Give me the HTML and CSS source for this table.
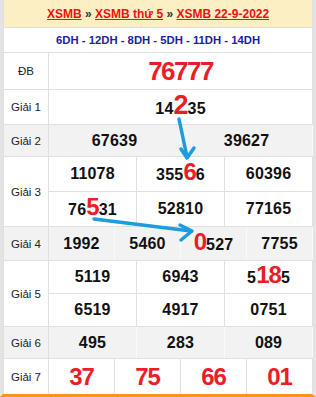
FILE: index.html
```html
<!DOCTYPE html>
<html lang="vi">
<head>
<meta charset="utf-8">
<link rel="stylesheet" href="styles.css">
</head>
<body>
<div class="frame">
  <table class="kq">
    <colgroup>
      <col class="c-label">
      <col class="c"><col class="c"><col class="c"><col class="c"><col class="c"><col class="c">
      <col class="c"><col class="c"><col class="c"><col class="c"><col class="c"><col class="c">
    </colgroup>
    <tr class="r-head">
      <td colspan="13" class="head"><a href="#">XSMB</a> <span class="sep">»</span> <a href="#">XSMB thứ 5</a> <span class="sep">»</span> <a href="#">XSMB 22-9-2022</a></td>
    </tr>
    <tr class="r-dh">
      <td colspan="13" class="dh">6DH - 12DH - 8DH - 5DH - 11DH - 14DH</td>
    </tr>
    <tr class="r-db">
      <td class="lbl">ĐB</td>
      <td colspan="12" class="num db">76777</td>
    </tr>
    <tr class="r-g1">
      <td class="lbl">Giải 1</td>
      <td colspan="12" class="num">14<span class="hl hl-big">2</span>35</td>
    </tr>
    <tr class="r-g2 alt">
      <td class="lbl">Giải 2</td>
      <td colspan="6" class="num">67639</td>
      <td colspan="6" class="num">39627</td>
    </tr>
    <tr class="r-sub">
      <td class="lbl" rowspan="2">Giải 3</td>
      <td colspan="4" class="num">11078</td>
      <td colspan="4" class="num">355<span class="hl">6</span>6</td>
      <td colspan="4" class="num">60396</td>
    </tr>
    <tr class="r-sub">
      <td colspan="4" class="num">76<span class="hl">5</span>31</td>
      <td colspan="4" class="num">52810</td>
      <td colspan="4" class="num">77165</td>
    </tr>
    <tr class="r-g4 alt">
      <td class="lbl">Giải 4</td>
      <td colspan="3" class="num">1992</td>
      <td colspan="3" class="num">5460</td>
      <td colspan="3" class="num"><span class="hl">0</span>527</td>
      <td colspan="3" class="num">7755</td>
    </tr>
    <tr class="r-sub5">
      <td class="lbl" rowspan="2">Giải 5</td>
      <td colspan="4" class="num">5119</td>
      <td colspan="4" class="num">6943</td>
      <td colspan="4" class="num">5<span class="hl">18</span>5</td>
    </tr>
    <tr class="r-sub5">
      <td colspan="4" class="num">6519</td>
      <td colspan="4" class="num">4917</td>
      <td colspan="4" class="num">0751</td>
    </tr>
    <tr class="r-g6 alt">
      <td class="lbl">Giải 6</td>
      <td colspan="4" class="num">495</td>
      <td colspan="4" class="num">283</td>
      <td colspan="4" class="num">089</td>
    </tr>
    <tr class="r-g7">
      <td class="lbl">Giải 7</td>
      <td colspan="3" class="num g7">37</td>
      <td colspan="3" class="num g7">75</td>
      <td colspan="3" class="num g7">66</td>
      <td colspan="3" class="num g7">01</td>
    </tr>
  </table>
  <svg class="arrows" width="316" height="397" viewBox="0 0 316 397" aria-hidden="true">
    <g fill="none" stroke="#1c9de0" stroke-width="3.5" stroke-linecap="round" stroke-linejoin="round">
      <line x1="179" y1="119" x2="187" y2="157"/>
      <polyline points="181,149 187,158 194,148"/>
      <line x1="94" y1="219" x2="191" y2="231"/>
      <polyline points="180,225 192,231 181,240"/>
    </g>
  </svg>
</div>
</body>
</html>
```

FILE: styles.css
```css
html, body {
  margin: 0;
  padding: 0;
  background: #ffffff;
}

body {
  font-family: "Liberation Sans", Arial, sans-serif;
  width: 316px;
  height: 397px;
  overflow: hidden;
}

.frame {
  position: relative;
  width: 309px;
  border-left: 3px solid #e3e3e3;
  border-right: 4px solid #e3e3e3;
  border-bottom: 3px solid #f7941d;
}

.kq {
  width: 309px;
  table-layout: fixed;
  border-collapse: collapse;
}

.c-label { width: 45px; }
.c { width: 22px; }

.kq td {
  border: 1px solid #e0e0e0;
  padding: 0;
  text-align: center;
  vertical-align: middle;
  white-space: nowrap;
}

.head {
  background: #fdefc4;
  height: 27px;
  font-size: 12px;
  font-weight: bold;
  border-top: 0 !important;
}

.head a {
  color: #ee1111;
  text-decoration: underline;
}

.sep {
  color: #333333;
}

.dh {
  height: 24px;
  font-size: 11.3px;
  font-weight: bold;
  color: #1e1e9e;
  background: #ffffff;
}

.lbl {
  font-size: 11.5px;
  color: #222222;
}

.num {
  font-size: 16px;
  font-weight: bold;
  color: #111111;
  letter-spacing: 0.2px;
}

.db {
  font-size: 26px;
  color: #ee1c25;
  letter-spacing: -1.5px;
}

.hl {
  font-size: 24px;
  color: #ee1c25;
  letter-spacing: -1px;
  line-height: 16px;
}

.hl-big {
  font-size: 27px;
}

.g7 {
  font-size: 24px;
  color: #ee1c25;
  letter-spacing: -1px;
}

.r-db td { height: 36px; }
.r-g1 td { height: 34px; }
.r-g2 td { height: 31px; }
.r-sub td { height: 34px; }
.r-g4 td { height: 33px; }
.r-sub5 td { height: 32px; }
.r-g6 td { height: 31px; }
.r-g7 td { height: 35px; }

.r-sub td[rowspan], .r-sub5 td[rowspan] { height: auto; }

.alt td {
  background: #f2f2f2;
}

.alt td.num {
  border-left-color: #fafafa;
  border-right-color: #fafafa;
}

.r-g7 td { border-bottom: 0; }

.arrows {
  position: absolute;
  left: -3px;
  top: 0;
  pointer-events: none;
}
```
